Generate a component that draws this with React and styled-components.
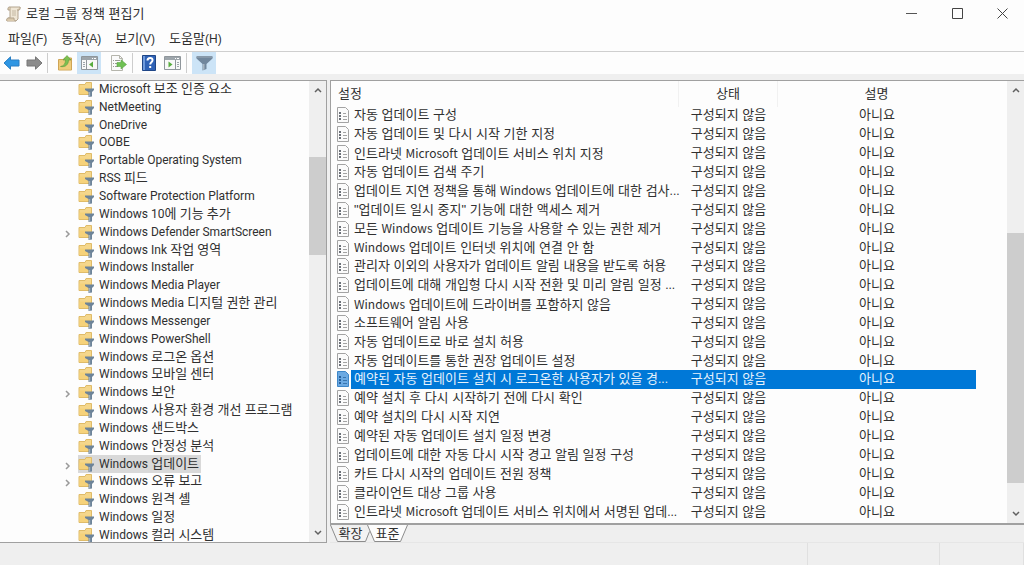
import React from 'react';
import styled, { createGlobalStyle, css } from 'styled-components';

const GlobalStyle = createGlobalStyle`
  *, *::before, *::after { box-sizing: border-box; }
  body {
    margin: 0;
    background: #efefef;
    color: #303030;
    font-family: "Liberation Sans", "Noto Sans CJK KR", sans-serif;
    font-size: 13px;
    line-height: 18px;
  }
  button {
    padding: 0;
    border: 0;
    background: none;
    color: inherit;
    font: inherit;
  }
  svg { display: block; flex: none; }
`;

const Window = styled.div`
  display: flex;
  flex-direction: column;
  height: 100vh;
  overflow: hidden;
`;

const TitleBar = styled.header`
  display: flex;
  flex: none;
  align-items: center;
  height: 27px;
  padding-left: 6px;
  gap: 5px;
  background: #fdfdfd;
`;

const Title = styled.h1`
  flex: 1;
  margin: 0;
  font-size: 13px;
  font-weight: 400;
`;

const CaptionButtons = styled.div`
  display: flex;
`;

const CaptionButton = styled.button`
  display: grid;
  place-items: center;
  width: 46px;
  height: 27px;
  &:last-child { width: 44px; }
`;

const MenuBar = styled.nav`
  display: flex;
  flex: none;
  align-items: center;
  height: 25px;
  padding-left: 8px;
  gap: 14px;
  background: #fdfdfd;
  border-bottom: 1px solid #cfcfcf;
`;

const MenuButton = styled.button`
  display: flex;
  align-items: baseline;
`;

const AccessKey = styled.span`
  font-size: 12px;
`;

const ToolBar = styled.div`
  display: flex;
  flex: none;
  align-items: center;
  height: 22px;
  background: #fdfdfd;
`;

const ToolButton = styled.button`
  display: grid;
  place-items: center;
  width: ${(p) => p.$width || 23}px;
  height: 22px;
  background: ${(p) => (p.$active ? '#cce4f7' : 'transparent')};
`;

const ToolGap = styled.span`
  width: 4px;
`;

const ToolSeparator = styled.span`
  width: 1px;
  height: 20px;
  margin: 0 ${(p) => p.$after}px 0 ${(p) => p.$before}px;
  background: #cdcdcd;
`;

const Workspace = styled.main`
  display: flex;
  flex: 1;
  min-height: 0;
  gap: 3px;
  padding-top: 6px;
`;

const TreePane = styled.section`
  display: flex;
  flex: 0 0 327px;
  min-height: 0;
  overflow: hidden;
  background: #fdfdfd;
  border: 1px solid #a0a0a0;
  border-left: 0;
`;

const TreeList = styled.ul`
  display: flex;
  flex: 1;
  flex-direction: column;
  min-width: 0;
  margin: -1px 0 -2px;
  padding: 0 0 0 63px;
  font-family: Roboto, "Noto Sans CJK KR", sans-serif;
  list-style: none;
`;

const TreeItem = styled.li`
  display: flex;
  flex: 1 1 18px;
  align-items: center;
  min-height: 0;
`;

const Expander = styled.span`
  display: flex;
  flex: 0 0 15px;
  padding-top: 4px;
`;

const TreeLabel = styled.span`
  display: flex;
  align-items: center;
  height: 18px;
  gap: 5px;
  padding: 0 2px 0 0;
  white-space: nowrap;
  background: ${(p) => (p.$selected ? '#d9d9d9' : 'transparent')};
`;

const Latin = styled.span`
  font-family: ${(p) => (p.$humanist ? '"Noto Sans CJK KR", sans-serif' : 'inherit')};
  font-size: 12px;
`;

const ScrollBar = styled.div`
  display: flex;
  flex: 0 0 ${(p) => p.$width}px;
  flex-direction: column;
  background: #efefef;
`;

const ScrollArrow = styled.button`
  display: grid;
  flex: none;
  place-items: center;
  height: 18px;
`;

const ScrollGap = styled.div`
  flex: ${(p) => p.$share} 1 0;
`;

const ScrollThumb = styled.div`
  flex: ${(p) => p.$share} 1 0;
  background: #cdcdcd;
`;

const DetailPane = styled.section`
  display: flex;
  flex: 1;
  flex-direction: column;
  min-width: 0;
`;

const ListFrame = styled.div`
  display: flex;
  flex: 1;
  min-height: 0;
  overflow: hidden;
  background: #fdfdfd;
  border: 1px solid #a0a0a0;
  border-right: 0;
  border-bottom: 2px solid #a0a0a0;
`;

const PolicyTable = styled.table`
  display: flex;
  flex: 1;
  flex-direction: column;
  min-width: 0;
  padding: 0 31px 2px 5px;
`;

const TableHead = styled.thead`
  display: block;
  flex: none;
`;

const TableBody = styled.tbody`
  display: flex;
  flex: 1;
  flex-direction: column;
  min-height: 0;
`;

const columns = css`
  display: grid;
  grid-template-columns: minmax(0, 1fr) 99px 198px;
`;

const HeadRow = styled.tr`
  ${columns}
  height: 25px;
`;

const HeadCell = styled.th`
  padding: 4px 2px;
  font-weight: 400;
  text-align: ${(p) => p.$align || 'center'};
  border-right: 1px solid ${(p) => (p.$last ? 'transparent' : '#f1f1f1')};
`;

const PolicyRow = styled.tr`
  ${columns}
  flex: 1 1 19px;
  min-height: 0;
  color: ${(p) => (p.$selected ? '#e6f2fc' : 'inherit')};
`;

const Cell = styled.td`
  display: flex;
  align-items: center;
  justify-content: center;
  min-width: 0;
  padding: 0;
  white-space: nowrap;
  background: ${(p) => (p.$selected ? '#0078d7' : 'transparent')};
`;

const NameCell = styled.td`
  display: flex;
  align-items: center;
  min-width: 0;
  padding: 0;
  gap: 1px;
`;

const PolicyName = styled.span`
  display: flex;
  flex: 1;
  align-self: stretch;
  align-items: center;
  min-width: 0;
  padding-left: 3px;
  white-space: nowrap;
  background: ${(p) => (p.$selected ? '#0078d7' : 'transparent')};
`;

const TabStrip = styled.div`
  display: flex;
  flex: none;
  height: 18px;
  border-bottom: 1px solid #e6e6e6;
`;

const Tab = styled.button`
  position: relative;
  display: grid;
  place-items: center;
  width: ${(p) => p.$width}px;
  height: 18px;
  margin-right: -4px;
`;

const TabShape = styled.svg`
  position: absolute;
  inset: 0;
`;

const TabText = styled.span`
  position: relative;
  line-height: 18px;
`;

const StatusBar = styled.footer`
  display: flex;
  flex: none;
  height: 22px;
`;

const StatusCell = styled.div`
  flex: ${(p) => (p.$width ? `0 0 ${p.$width}px` : 1)};
  border-right: 1px solid #e0e0e0;
`;

const ScrollIcon = () => (
  <svg width="15" height="16" viewBox="0 0 15 16">
    <path d="M4 1h10l-1 3h-1v9l-2 2H1l1-3h2z" fill="#efe6d5" stroke="#b3a48e" />
    <path d="M4 1c-1.500-.5-2.500 1-2 3h2M11 4h2c1 0 1.500-2 1-3M1 15c-1-1 0-3 1-3h6c0 1 0 3 2 3" fill="#d9c9ad" stroke="#b3a48e" />
    <path d="M6 5h4M6 7h4M6 9h4" stroke="#c4b8a2" />
  </svg>
);

const ArrowIcon = ({ right, fill, edge }) => (
  <svg width="17" height="14" viewBox="0 0 17 14">
    <path
      d={right ? 'M16 7 9.500.800V4H1v6h8.500v3.200z' : 'M1 7 7.500.800V4H16v6H7.500v3.200z'}
      fill={fill}
      stroke={edge}
    />
  </svg>
);

const FolderUpIcon = () => (
  <svg width="16" height="16" viewBox="0 0 16 16">
    <path d="M1.500 4.500h5l1-1.500h7v12h-13z" fill="#edc878" stroke="#cfa556" />
    <path d="M2 8h12v6.500H2z" fill="#f0cd7c" />
    <path d="M3.500 11.500C7 11 8.500 8.500 8.500 5H6l4-4.500L14 5h-2.500c0 4.500-3 7.500-8 6.500z" fill="#7cc051" stroke="#5b9a3a" strokeWidth=".6" />
  </svg>
);

const PanelIcon = ({ flip }) => (
  <svg width="17" height="14" viewBox="0 0 17 14">
    <path d="M.5.5h16v13H.5z" fill="#f8f8f8" stroke="#8f969b" />
    <path d="M1 1h15v3H1z" fill="#9da5ab" />
    <path d="M11 2.500h1M13 2.500h2" stroke="#fff" />
    <path d={flip ? 'M11.500 4v9' : 'M5.500 4v9'} stroke="#8f969b" />
    <path d={flip ? 'M13 6.500h2M13 8.500h2M13 10.500h2' : 'M2 6.500h2M2 8.500h2M2 10.500h2'} stroke="#9da5ab" />
    <path d={flip ? 'M4.500 5.500v6l4-3z' : 'M12 5.500v6l-4-3z'} fill="#58ad3f" />
  </svg>
);

const ExportIcon = () => (
  <svg width="17" height="16" viewBox="0 0 17 16">
    <path d="M1.500.5h8l3 3v12h-11z" fill="#fafafa" stroke="#b5b5ac" />
    <path d="M9.500.5v3h3" fill="none" stroke="#b5b5ac" />
    <path d="M3 5.500h1M3 8.500h1M3 11.500h1M5 5.500h5M5 8.500h3M5 11.500h3" stroke="#9b9b96" />
    <path d="M7 7.500h4V4.800L16.500 9.500 11 14v-2.500H7z" fill="#6fc153" stroke="#5aa544" strokeWidth=".6" />
  </svg>
);

const HelpIcon = () => (
  <svg width="14" height="16" viewBox="0 0 14 16">
    <path d="M.5.5h13v15H.5z" fill="#2f62b6" stroke="#1f4687" />
    <path d="M1 1h2v14H1z" fill="#6f9bdc" />
    <path d="M5.500 5.500c0-3.500 5.500-3.500 5 0-.2 1.800-2.300 2-2.300 4" fill="none" stroke="#fff" strokeWidth="2" />
    <path d="M7.200 11h2v2h-2z" fill="#fff" />
  </svg>
);

const FunnelIcon = () => (
  <svg width="17" height="16" viewBox="0 0 17 16">
    <path d="M.5 2h16v1.500L10.500 9v5l-4 1.500V9L.5 3.500z" fill="#71879d" />
    <path d="M.5 1h16v2H.5z" fill="#8799aa" />
    <path d="M7 9h1.500v5.500L7 15z" fill="#a9b7c4" />
  </svg>
);

const FolderIcon = () => (
  <svg width="16" height="16" viewBox="0 0 16 16">
    <path d="M1 3.500h6l1-2h5.500v12H1z" fill="#f5d78c" stroke="#dfbb68" />
    <path d="M1.500 6.500H13V13H1.500z" fill="#f6d27a" />
    <path d="M7 7.500h9V9l-2 2v4.500L10.500 16v-5L7 9z" fill="#6d8499" />
    <path d="M11 11h1.200v4.500l-1.200.3z" fill="#9fb0bf" />
  </svg>
);

const PolicyIcon = ({ selected }) => (
  <svg width="14" height="16" viewBox="0 0 14 16">
    <path d="M1.500.5h8l3 3v12h-11z" fill={selected ? '#6ba9e2' : '#fbfbfb'} stroke={selected ? '#3d86c8' : '#a3a3a3'} />
    <path d="M3 5h2v2H3zM3 8h2v2H3zM3 11h2v2H3z" fill={selected ? '#265f9c' : '#6b7078'} />
    <path d="M7 6.500h3M7 9.500h4M7 12.500h4" stroke={selected ? '#3875ae' : '#a3a3a3'} />
  </svg>
);

const Chevron = ({ d, width = 8, height = 6, color = '#606060' }) => (
  <svg width={width} height={height} viewBox={`0 0 ${width} ${height}`}>
    <path d={d} fill="none" stroke={color} strokeWidth="1.500" />
  </svg>
);

const menus = [
  ['파일', '(F)'],
  ['동작', '(A)'],
  ['보기', '(V)'],
  ['도움말', '(H)'],
];

const treeNodes = [
  { name: 'Microsoft 보조 인증 요소' },
  { name: 'NetMeeting' },
  { name: 'OneDrive' },
  { name: 'OOBE' },
  { name: 'Portable Operating System' },
  { name: 'RSS 피드' },
  { name: 'Software Protection Platform' },
  { name: 'Windows 10에 기능 추가' },
  { name: 'Windows Defender SmartScreen', expandable: true },
  { name: 'Windows Ink 작업 영역' },
  { name: 'Windows Installer' },
  { name: 'Windows Media Player' },
  { name: 'Windows Media 디지털 권한 관리' },
  { name: 'Windows Messenger' },
  { name: 'Windows PowerShell' },
  { name: 'Windows 로그온 옵션' },
  { name: 'Windows 모바일 센터' },
  { name: 'Windows 보안', expandable: true },
  { name: 'Windows 사용자 환경 개선 프로그램' },
  { name: 'Windows 샌드박스' },
  { name: 'Windows 안정성 분석' },
  { name: 'Windows 업데이트', expandable: true, selected: true },
  { name: 'Windows 오류 보고', expandable: true },
  { name: 'Windows 원격 셸' },
  { name: 'Windows 일정' },
  { name: 'Windows 컬러 시스템' },
];

const policies = [
  '자동 업데이트 구성',
  '자동 업데이트 및 다시 시작 기한 지정',
  '인트라넷 Microsoft 업데이트 서비스 위치 지정',
  '자동 업데이트 검색 주기',
  '업데이트 지연 정책을 통해 Windows 업데이트에 대한 검사...',
  '"업데이트 일시 중지" 기능에 대한 액세스 제거',
  '모든 Windows 업데이트 기능을 사용할 수 있는 권한 제거',
  'Windows 업데이트 인터넷 위치에 연결 안 함',
  '관리자 이외의 사용자가 업데이트 알림 내용을 받도록 허용',
  '업데이트에 대해 개입형 다시 시작 전환 및 미리 알림 일정 ...',
  'Windows 업데이트에 드라이버를 포함하지 않음',
  '소프트웨어 알림 사용',
  '자동 업데이트로 바로 설치 허용',
  '자동 업데이트를 통한 권장 업데이트 설정',
  '예약된 자동 업데이트 설치 시 로그온한 사용자가 있을 경...',
  '예약 설치 후 다시 시작하기 전에 다시 확인',
  '예약 설치의 다시 시작 지연',
  '예약된 자동 업데이트 설치 일정 변경',
  '업데이트에 대한 자동 다시 시작 경고 알림 일정 구성',
  '카트 다시 시작의 업데이트 전원 정책',
  '클라이언트 대상 그룹 사용',
  '인트라넷 Microsoft 업데이트 서비스 위치에서 서명된 업데...',
];
const selectedPolicy = 14;

const MixedLine = styled.span`
  white-space: pre;
`;

const MixedText = ({ text, humanist }) => (
  <MixedLine>
    {text.split(/((?:[A-Za-z0-9]+(?: [A-Za-z0-9]+)*)|\.\.\.)/).map((part, i) =>
      i % 2 ? <Latin key={i} $humanist={humanist && part !== '...'}>{part}</Latin> : part
    )}
  </MixedLine>
);

const Scroller = ({ width, before, thumb, after }) => (
  <ScrollBar $width={width}>
    <ScrollArrow aria-label="위로 스크롤"><Chevron d="M1 5 4 2 7 5" /></ScrollArrow>
    <ScrollGap $share={before} />
    <ScrollThumb $share={thumb} />
    <ScrollGap $share={after} />
    <ScrollArrow aria-label="아래로 스크롤"><Chevron d="M1 1 4 4 7 1" /></ScrollArrow>
  </ScrollBar>
);

export default function App() {
  return (
    <Window>
      <GlobalStyle />
      <TitleBar>
        <ScrollIcon />
        <Title>로컬 그룹 정책 편집기</Title>
        <CaptionButtons>
          <CaptionButton aria-label="최소화">
            <svg width="11" height="11" viewBox="0 0 11 11"><path d="M0 5.500h11" stroke="#555" /></svg>
          </CaptionButton>
          <CaptionButton aria-label="최대화">
            <svg width="11" height="11" viewBox="0 0 11 11"><path d="M.5.5h10v10H.5z" fill="none" stroke="#444" /></svg>
          </CaptionButton>
          <CaptionButton aria-label="닫기">
            <svg width="11" height="11" viewBox="0 0 11 11"><path d="M.5.5l10 10M10.500.5l-10 10" stroke="#444" /></svg>
          </CaptionButton>
        </CaptionButtons>
      </TitleBar>

      <MenuBar>
        {menus.map(([label, key]) => (
          <MenuButton key={key}>{label}<AccessKey>{key}</AccessKey></MenuButton>
        ))}
      </MenuBar>

      <ToolBar>
        <ToolButton aria-label="뒤로"><ArrowIcon fill="#2f96e3" edge="#2a7fc4" /></ToolButton>
        <ToolButton aria-label="앞으로"><ArrowIcon right fill="#8c8c8c" edge="#777" /></ToolButton>
        <ToolSeparator $before={1} $after={5} />
        <ToolButton aria-label="상위 폴더" $width={24}><FolderUpIcon /></ToolButton>
        <ToolButton aria-label="콘솔 트리 표시" $width={24} $active><PanelIcon /></ToolButton>
        <ToolGap />
        <ToolButton aria-label="목록 내보내기" $width={27}><ExportIcon /></ToolButton>
        <ToolSeparator $before={0} $after={4} />
        <ToolButton aria-label="도움말" $width={24}><HelpIcon /></ToolButton>
        <ToolButton aria-label="작업 창 표시"><PanelIcon flip /></ToolButton>
        <ToolSeparator $before={2} $after={5} />
        <ToolButton aria-label="필터" $width={24} $active><FunnelIcon /></ToolButton>
      </ToolBar>

      <Workspace>
        <TreePane>
          <TreeList role="tree">
            {treeNodes.map((node) => (
              <TreeItem key={node.name} role="treeitem" aria-selected={!!node.selected}>
                <Expander>
                  {node.expandable && <Chevron d="M3 1 6 4 3 7" width={8} height={8} color="#9a9a9a" />}
                </Expander>
                <TreeLabel $selected={node.selected}>
                  <FolderIcon />
                  <MixedText text={node.name} />
                </TreeLabel>
              </TreeItem>
            ))}
          </TreeList>
          <Scroller width={17} before={58} thumb={98} after={269} />
        </TreePane>

        <DetailPane>
          <ListFrame>
            <PolicyTable>
              <TableHead>
                <HeadRow>
                  <HeadCell $align="left">설정</HeadCell>
                  <HeadCell>상태</HeadCell>
                  <HeadCell $last>설명</HeadCell>
                </HeadRow>
              </TableHead>
              <TableBody>
                {policies.map((name, i) => {
                  const selected = i === selectedPolicy;
                  return (
                    <PolicyRow key={name} $selected={selected}>
                      <NameCell>
                        <PolicyIcon selected={selected} />
                        <PolicyName $selected={selected}><MixedText text={name} humanist /></PolicyName>
                      </NameCell>
                      <Cell $selected={selected}>구성되지 않음</Cell>
                      <Cell $selected={selected}>아니요</Cell>
                    </PolicyRow>
                  );
                })}
              </TableBody>
            </PolicyTable>
            <Scroller width={17} before={134} thumb={250} after={22} />
          </ListFrame>
          <TabStrip role="tablist">
            <Tab role="tab" aria-selected="false" $width={41}>
              <TabShape width="41" height="18" viewBox="0 0 41 18">
                <path d="M.5 0l7 16.500h28l4-10" fill="#f3f3f3" stroke="#8c8c8c" />
              </TabShape>
              <TabText>확장</TabText>
            </Tab>
            <Tab role="tab" aria-selected="true" $width={41}>
              <TabShape width="41" height="18" viewBox="0 0 41 18">
                <path d="M.5 0l7 16.500h26L40.500 0" fill="#fdfdfd" stroke="#8c8c8c" />
              </TabShape>
              <TabText>표준</TabText>
            </Tab>
          </TabStrip>
        </DetailPane>
      </Workspace>

      <StatusBar>
        <StatusCell />
        <StatusCell $width={132} />
        <StatusCell $width={84} />
      </StatusBar>
    </Window>
  );
}
